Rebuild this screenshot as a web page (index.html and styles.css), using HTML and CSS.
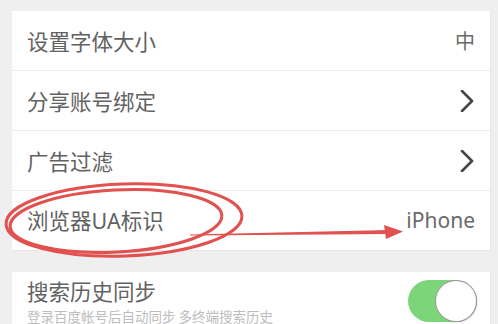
FILE: index.html
```html
<!DOCTYPE html>
<html lang="zh-CN">
<head>
<meta charset="utf-8">
<link rel="stylesheet" href="styles.css">
</head>
<body>
<div class="page">
  <div class="card">
    <div class="row">
      <span class="label">设置字体大小</span>
      <span class="value">中</span>
    </div>
    <div class="row">
      <span class="label">分享账号绑定</span>
      <svg class="chev" width="14" height="22" viewBox="0 0 14 22"><polyline points="2,1 12,11 2,21" fill="none" stroke="#454545" stroke-width="2.6" stroke-linecap="round" stroke-linejoin="round"/></svg>
    </div>
    <div class="row">
      <span class="label">广告过滤</span>
      <svg class="chev" width="14" height="22" viewBox="0 0 14 22"><polyline points="2,1 12,11 2,21" fill="none" stroke="#454545" stroke-width="2.6" stroke-linecap="round" stroke-linejoin="round"/></svg>
    </div>
    <div class="row">
      <span class="label">浏览器<span class="latin">UA</span>标识</span>
      <span class="value latin">iPhone</span>
    </div>
  </div>
  <div class="card card2">
    <div class="row sync">
      <div class="texts">
        <span class="label">搜索历史同步</span>
        <span class="sub">登录百度帐号后自动同步 多终端搜索历史</span>
      </div>
      <div class="toggle"><div class="knob"></div></div>
    </div>
  </div>
</div>
<svg class="annot" width="498" height="324" viewBox="0 0 498 324">
  <ellipse cx="124" cy="220" rx="118" ry="36" transform="rotate(-2 124 220)" fill="none" stroke="#e0514f" stroke-width="3"/>
  <ellipse cx="116" cy="221" rx="106" ry="31" transform="rotate(-3 116 221)" fill="none" stroke="#e0514f" stroke-width="3"/>
  <polygon points="190,234.5 390,230 390,234 190,235.5" fill="#e0514f"/>
  <polygon points="384,225 403,231.5 386,239" fill="#e0514f"/>
</svg>
</body>
</html>
```
FILE: styles.css
```css
html, body {
  margin: 0;
  padding: 0;
}
body {
  background: #efefef;
  width: 498px;
  height: 324px;
  overflow: hidden;
  position: relative;
  font-family: "Noto Sans CJK SC", sans-serif;
}
.page {
  padding: 11px 7px 0 12px;
}
.card {
  background: #ffffff;
  border: 1px solid #e6e6e6;
  border-width: 0 1px 1px 0;
}
.card2 {
  margin-top: 21px;
}
.row {
  height: 59px;
  display: flex;
  align-items: center;
  justify-content: space-between;
  padding: 0 15px;
  border-bottom: 1px solid #ececec;
}
.row:last-child {
  border-bottom: none;
}
.label {
  font-size: 21.5px;
  color: #626262;
  line-height: 1;
}
.value {
  font-size: 20px;
  color: #6a6a6a;
  line-height: 1;
}
.latin {
  font-family: "Noto Sans", "Noto Sans CJK SC", sans-serif;
}
.value.latin {
  font-size: 21px;
}
.chev {
  margin-right: 1px;
}
.sync {
  height: 56px;
  align-items: flex-start;
  padding: 8px 13px 0 15px;
}
.texts {
  display: flex;
  flex-direction: column;
  gap: 8px;
}
.sub {
  font-size: 13.5px;
  color: #bdbdbd;
  line-height: 1;
  white-space: pre;
}
.toggle {
  width: 69px;
  height: 42px;
  margin-top: 0;
  border-radius: 21px;
  background: #7dd57a;
  display: flex;
  justify-content: flex-end;
  align-items: center;
  padding: 1px;
  box-sizing: border-box;
}
.knob {
  width: 40px;
  height: 40px;
  border-radius: 50%;
  background: #ffffff;
  box-shadow: 0 0 0 1px #9a9a9a, 1px 1px 2px rgba(0,0,0,0.25);
}
.annot {
  position: absolute;
  left: 0;
  top: 0;
  pointer-events: none;
}
```
